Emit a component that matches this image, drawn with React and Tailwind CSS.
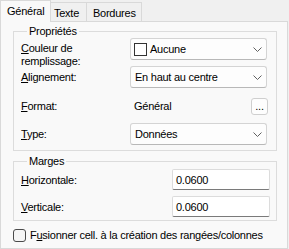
const Chevron = () => (
  <svg width="9" height="5" viewBox="0 0 9 5" className="ml-auto shrink-0">
    <path d="M0.5 0.5 L4.5 4.5 L8.5 0.5" fill="none" stroke="#606060" strokeWidth="1" />
  </svg>
);

function Combo({ children }) {
  return (
    <div className="w-[137px] h-[22px] flex items-center pl-[3px] pr-[4px] bg-[#fdfdfd] border border-[#d4d4d4] border-b-[#b8b8b8] rounded-[3px]">
      {children}
      <Chevron />
    </div>
  );
}

function TextBox({ value }) {
  return (
    <div className="w-[98px] h-[21px] flex items-center pl-[3px] bg-white border border-[#dcdcdc] border-b-[#7a7a7a] rounded-[2px] ml-auto">
      {value}
    </div>
  );
}

export default function App() {
  return (
    <div className="w-[289px] h-[249px] bg-[#f0f0f0] text-black text-[11px] tracking-[-0.25px] leading-[14px] font-['Liberation_Sans',Arial,sans-serif] overflow-hidden">
      {/* Tabs */}
      <div className="flex items-end h-[21px]">
        <div className="relative z-10 -mb-px h-[22px] w-[51px] pl-[6px] pt-[3px] bg-[#f9f9f9] border border-b-0 border-[#d9d9d9]">
          Général
        </div>
        <div className="h-[19px] w-[36px] pl-[3px] pt-[3px] border-t border-r border-[#d9d9d9] bg-[#f0f0f0]">
          Texte
        </div>
        <div className="h-[19px] w-[55px] pl-[6px] pt-[3px] border-t border-r border-[#d9d9d9] bg-[#f0f0f0]">
          Bordures
        </div>
      </div>

      {/* Panel */}
      <div className="w-[288px] h-[228px] border border-[#d9d9d9] bg-[#f9f9f9]">
        <fieldset className="ml-[12px] mt-[3px] w-[264px] border border-[#dcdcdc] px-[7px] pb-[5px]">
          <legend className="ml-[6px] px-[2px] leading-[13px]">Propriétés</legend>

          <div className="flex items-start h-[28px]">
            <div className="w-[109px] pt-[4px] leading-[13px]">
              <u>C</u>ouleur de<br />remplissage:
            </div>
            <Combo>
              <div className="w-[13px] h-[13px] border border-[#333] bg-white shrink-0" />
              <span className="ml-[3px]">Aucune</span>
            </Combo>
          </div>

          <div className="flex items-start h-[28px]">
            <div className="w-[109px] leading-[22px]">
              <u>A</u>lignement:
            </div>
            <Combo>
              <span className="pl-px">En haut au centre</span>
            </Combo>
          </div>

          <div className="flex items-center h-[24px]">
            <div className="w-[109px]">
              <u>F</u>ormat:
            </div>
            <span className="pl-[4px]">Général</span>
            <div className="ml-auto mr-[1px] w-[17px] h-[17px] flex items-end justify-center pb-[2px] leading-none bg-[#fdfdfd] border border-[#cfcfcf] rounded-[3px]">
              ...
            </div>
          </div>

          <div className="flex items-center mt-[5px]">
            <div className="w-[109px]">
              <u>T</u>ype:
            </div>
            <Combo>
              <span className="pl-px">Données</span>
            </Combo>
          </div>
        </fieldset>

        <fieldset className="ml-[12px] mt-[4px] w-[264px] border border-[#dcdcdc] pl-[7px] pr-[6px] pt-px pb-[3px]">
          <legend className="ml-[6px] px-[2px] leading-[13px]">Marges</legend>
          <div className="flex items-center">
            <span>
              <u>H</u>orizontale:
            </span>
            <TextBox value="0.0600" />
          </div>
          <div className="flex items-center mt-[6px]">
            <span>
              <u>V</u>erticale:
            </span>
            <TextBox value="0.0600" />
          </div>
        </fieldset>

        <div className="flex items-center ml-[12px] mt-[7px]">
          <div className="w-[13px] h-[13px] border border-[#4a4a4a] rounded-[3px] bg-[#f5f5f5] shrink-0" />
          <span className="ml-[4px]">
            F<u>u</u>sionner cell. à la création des rangées/colonnes
          </span>
        </div>
      </div>
    </div>
  );
}
